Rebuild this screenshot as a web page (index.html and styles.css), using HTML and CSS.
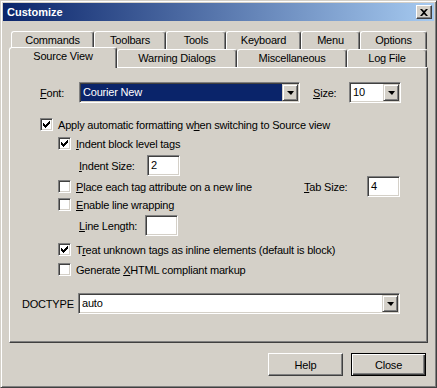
FILE: index.html
```html
<!DOCTYPE html>
<html lang="en">
<head>
    <meta charset="UTF-8">
    <title>Customize</title>
    <link rel="stylesheet" href="styles.css">
</head>
<body>
    <div class="window">
        <div class="titlebar">
            <span class="title">Customize</span>
            <span class="close-btn">
                <svg width="8" height="7" viewBox="0 0 8 7"><path d="M0 0h2l2 2 2-2h2L5 3.5 8 7H6L4 5 2 7H0l3-3.5z"/></svg>
            </span>
        </div>

        <div class="content">
            <div class="tabrow back">
                <div class="tab" style="width: 83px">Commands</div>
                <div class="tab" style="width: 72px">Toolbars</div>
                <div class="tab" style="width: 60px">Tools</div>
                <div class="tab" style="width: 75px">Keyboard</div>
                <div class="tab" style="width: 59px">Menu</div>
                <div class="tab" style="width: 67px">Options</div>
            </div>
            <div class="tabrow front">
                <div class="tab selected" style="width: 108px">Source View</div>
                <div class="tab" style="width: 120px">Warning Dialogs</div>
                <div class="tab" style="width: 110px">Miscellaneous</div>
                <div class="tab" style="width: 80px">Log File</div>
            </div>

            <div class="panel">
                <div class="row font-row">
                    <span class="lbl font-lbl"><u>F</u>ont:</span>
                    <div class="field select font-select">
                        <span class="value highlighted">Courier New</span>
                        <span class="drop"><span class="arrow"></span></span>
                    </div>
                    <span class="lbl size-lbl"><u>S</u>ize:</span>
                    <div class="field select size-select">
                        <span class="value">10</span>
                        <span class="drop"><span class="arrow"></span></span>
                    </div>
                </div>

                <div class="cb cb-top">
                    <span class="check"><svg width="7" height="7" viewBox="0 0 7 7"><path d="M0 2h1v3H0zM1 3h1v3H1zM2 4h1v3H2zM3 3h1v3H3zM4 2h1v3H4zM5 1h1v3H5zM6 0h1v3H6z"/></svg></span>
                    <span>Apply automatic formatting w<u>h</u>en switching to Source view</span>
                </div>

                <div class="cb cb-sub gap-6">
                    <span class="check"><svg width="7" height="7" viewBox="0 0 7 7"><path d="M0 2h1v3H0zM1 3h1v3H1zM2 4h1v3H2zM3 3h1v3H3zM4 2h1v3H4zM5 1h1v3H5zM6 0h1v3H6z"/></svg></span>
                    <span><u>I</u>ndent block level tags</span>
                </div>

                <div class="row sub-field gap-5">
                    <span class="lbl indent-lbl"><u>I</u>ndent Size:</span>
                    <div class="field text-field">2</div>
                </div>

                <div class="cb cb-sub wide gap-4">
                    <span class="check"></span>
                    <span class="grow"><u>P</u>lace each tag attribute on a new line</span>
                    <span class="lbl tab-lbl"><u>T</u>ab Size:</span>
                    <div class="field text-field">4</div>
                </div>

                <div class="cb cb-sub gap-5">
                    <span class="check"></span>
                    <span><u>E</u>nable line wrapping</span>
                </div>

                <div class="row sub-field gap-4">
                    <span class="lbl line-lbl"><u>L</u>ine Length:</span>
                    <div class="field text-field"></div>
                </div>

                <div class="cb cb-sub gap-7">
                    <span class="check"><svg width="7" height="7" viewBox="0 0 7 7"><path d="M0 2h1v3H0zM1 3h1v3H1zM2 4h1v3H2zM3 3h1v3H3zM4 2h1v3H4zM5 1h1v3H5zM6 0h1v3H6z"/></svg></span>
                    <span>T<u>r</u>eat unknown tags as inline elements (default is block)</span>
                </div>

                <div class="cb cb-sub gap-7">
                    <span class="check"></span>
                    <span>Generate <u>X</u>HTML compliant markup</span>
                </div>

                <div class="row doctype-row">
                    <span class="lbl doctype-lbl">DOCTYPE</span>
                    <div class="field select doctype-select">
                        <span class="value">auto</span>
                        <span class="drop"><span class="arrow"></span></span>
                    </div>
                </div>
            </div>

            <div class="actions">
                <div class="btn">Help</div>
                <div class="btn default">Close</div>
            </div>
        </div>
    </div>
</body>
</html>
```

FILE: styles.css
```css
* {
    margin: 0;
    padding: 0;
    box-sizing: border-box;
}
body {
    width: 437px;
    height: 388px;
    background: #d4d0c8;
    font-family: "Liberation Sans", Arial, sans-serif;
    font-size: 11px;
    letter-spacing: -0.2px;
    color: #000;
    overflow: hidden;
}
u {
    text-decoration: underline;
    text-underline-offset: 1px;
}
.window {
    width: 437px;
    height: 388px;
    padding: 2px;
    border: 1px solid;
    border-color: #d4d0c8 #404040 #404040 #d4d0c8;
    box-shadow: inset 1px 1px #fff, inset -1px -1px #808080;
}
.titlebar {
    height: 18px;
    display: flex;
    align-items: center;
    padding: 0 2px;
    background: linear-gradient(90deg, #0a246a, #a6caf0);
    color: #fff;
    font-weight: bold;
    letter-spacing: 0;
}
.title {
    flex: 1;
    padding-left: 2px;
}
.close-btn {
    width: 16px;
    height: 14px;
    display: flex;
    align-items: center;
    justify-content: center;
    background: #d4d0c8;
    border: 1px solid;
    border-color: #fff #404040 #404040 #fff;
    box-shadow: inset -1px -1px #808080;
}
.content {
    padding: 10px 6px 0 6px;
}

/* tabs */
.tabrow {
    display: flex;
    height: 18px;
}
.tabrow.back {
    padding-left: 2px;
}
.tabrow.front {
    align-items: flex-end;
}
.tab {
    height: 18px;
    flex: none;
    display: flex;
    justify-content: center;
    padding-top: 2px;
    background: #d4d0c8;
    border-top: 1px solid #fff;
    border-left: 1px solid #fff;
    border-right: 1px solid #404040;
    border-radius: 3px 3px 0 0;
    box-shadow: inset -1px 0 #808080;
    white-space: nowrap;
}
.tab.selected {
    height: 21px;
    margin-bottom: -1px;
    z-index: 1;
}

/* panel */
.panel {
    width: 419px;
    height: 276px;
    border: 1px solid;
    border-color: #fff #404040 #404040 #fff;
    box-shadow: inset -1px -1px #808080;
}
.row {
    display: flex;
    align-items: center;
}
.lbl {
    flex: none;
    white-space: nowrap;
}
.font-row {
    margin: 14px 0 0 30px;
    height: 21px;
}
.font-lbl { width: 39px; }
.size-lbl { width: 36px; margin-left: 13px; }
.indent-lbl { width: 68px; }
.line-lbl { width: 66px; }
.tab-lbl { width: 59px; }
.doctype-lbl { width: 56px; }

.field {
    height: 21px;
    background: #fff;
    border: 1px solid;
    border-color: #808080 #fff #fff #808080;
    box-shadow: inset 1px 1px #404040, inset -1px -1px #d4d0c8;
}
.text-field {
    width: 33px;
    padding: 2px 0 0 3px;
    line-height: 15px;
}
.select {
    display: flex;
    padding: 1px;
}
.select .value {
    flex: 1;
    padding-left: 2px;
    line-height: 17px;
}
.select .value.highlighted {
    background: #0a246a;
    color: #fff;
}
.font-select { width: 221px; }
.size-select { width: 52px; }
.doctype-select { width: 322px; }
.drop {
    width: 16px;
    height: 17px;
    display: flex;
    align-items: center;
    justify-content: center;
    background: #d4d0c8;
    border: 1px solid;
    border-color: #d4d0c8 #404040 #404040 #d4d0c8;
    box-shadow: inset 1px 1px #fff, inset -1px -1px #808080;
}
.arrow {
    width: 0;
    height: 0;
    border-left: 4px solid transparent;
    border-right: 3px solid transparent;
    border-top: 4px solid #000;
    margin-left: 1px;
}

/* checkboxes */
.cb {
    display: flex;
    align-items: center;
    gap: 4px;
    height: 13px;
    white-space: nowrap;
}
.cb-top {
    margin: 15px 0 0 30px;
}
.cb-sub {
    margin-left: 48px;
}
.cb.wide {
    width: 342px;
}
.grow {
    flex: 1;
}
.check {
    width: 13px;
    height: 13px;
    flex: none;
    display: flex;
    align-items: center;
    justify-content: center;
    background: #fff;
    border: 1px solid;
    border-color: #808080 #fff #fff #808080;
    box-shadow: inset 1px 1px #404040, inset -1px -1px #d4d0c8;
    margin-right: 1px;
}
.sub-field {
    margin-left: 69px;
    height: 21px;
}
.gap-4 { margin-top: 4px; }
.gap-5 { margin-top: 5px; }
.gap-6 { margin-top: 6px; }
.gap-7 { margin-top: 7px; }
.doctype-row {
    margin: 17px 0 0 12px;
    height: 21px;
}

/* buttons */
.actions {
    display: flex;
    justify-content: flex-end;
    gap: 8px;
    margin-top: 10px;
    padding-right: 2px;
}
.btn {
    width: 75px;
    height: 23px;
    display: flex;
    align-items: center;
    justify-content: center;
    background: #d4d0c8;
    border: 1px solid;
    border-color: #fff #404040 #404040 #fff;
    box-shadow: inset -1px -1px #808080;
}
.btn.default {
    border-color: #000;
    box-shadow: inset 1px 1px #fff, inset -1px -1px #404040, inset -2px -2px #808080;
}
```
